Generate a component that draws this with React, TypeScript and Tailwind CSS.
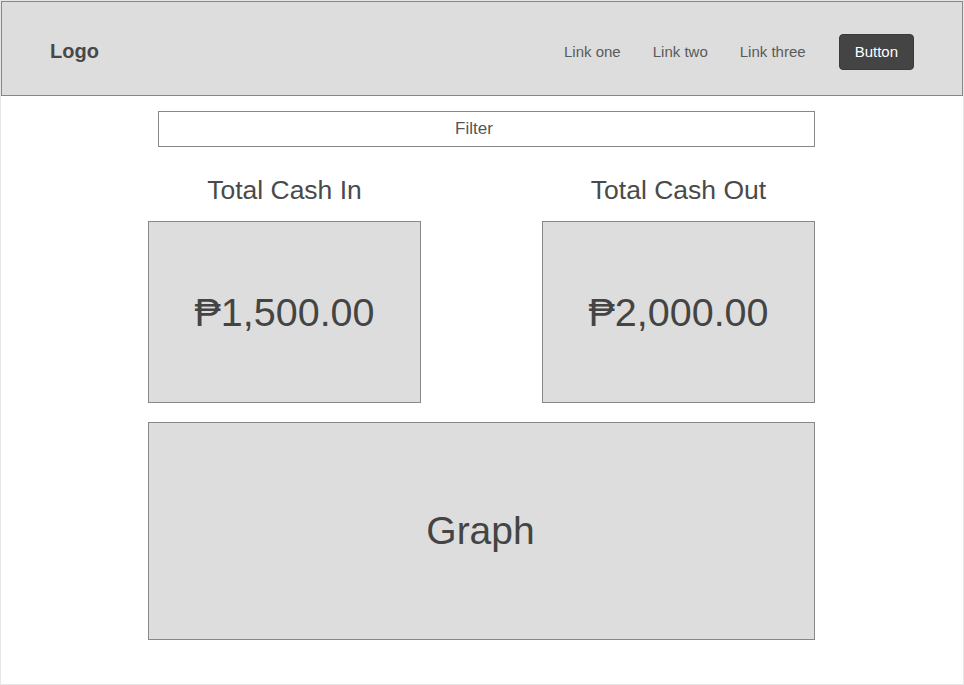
import React from 'react';

const links = ['Link one', 'Link two', 'Link three'];

const totals = [
  { label: 'Total Cash In', amount: '₱1,500.00' },
  { label: 'Total Cash Out', amount: '₱2,000.00' },
];

export default function App() {
  return (
    <div
      className="w-[964px] h-[685px] bg-white border border-[#e6e6e6] text-[#444444]"
      style={{ fontFamily: '"Liberation Sans", Arial, "DejaVu Sans", sans-serif' }}
    >
      <header className="w-[962px] h-[95px] bg-[#dddddd] border border-[#888888] flex items-center pl-[48px] pr-[48px]">
        <div className="text-[20px] font-bold text-[#484848] mt-[4px]">Logo</div>
        <nav className="ml-auto flex items-center mt-[6px]">
          <div className="flex items-center gap-[32px] text-[15px] text-[#5a5a5a]">
            {links.map((l) => (
              <a key={l} href="#" className="leading-none">
                {l}
              </a>
            ))}
          </div>
          <button className="ml-[33px] h-[36px] px-[15px] pt-[1px] rounded-[4px] bg-[#444444] text-white text-[15px] border border-[#3a3a3a]">
            Button
          </button>
        </nav>
      </header>

      <main className="w-[667px] ml-[147px] pt-[15px]">
        <div className="ml-[10px] h-[36px] border border-[#888888] flex items-center justify-center pr-[25px] text-[17px] text-[#555555]">
          Filter
        </div>

        <div className="grid grid-cols-[273px_273px] justify-between mt-[27px]">
          {totals.map((t) => (
            <div key={t.label} className="flex flex-col items-center">
              <div className="text-[26.5px] leading-[32px] text-[#4a4a4a]">{t.label}</div>
              <div className="mt-[15px] w-full h-[182px] bg-[#dddddd] border border-[#888888] flex items-center justify-center">
                <span className="text-[39.5px] text-[#444444] mt-[2px]">{t.amount}</span>
              </div>
            </div>
          ))}
        </div>

        <div className="mt-[19px] h-[218px] bg-[#dddddd] border border-[#888888] flex items-center justify-center">
          <span className="text-[39px] text-[#444444] ml-[-2px]">Graph</span>
        </div>
      </main>
    </div>
  );
}
